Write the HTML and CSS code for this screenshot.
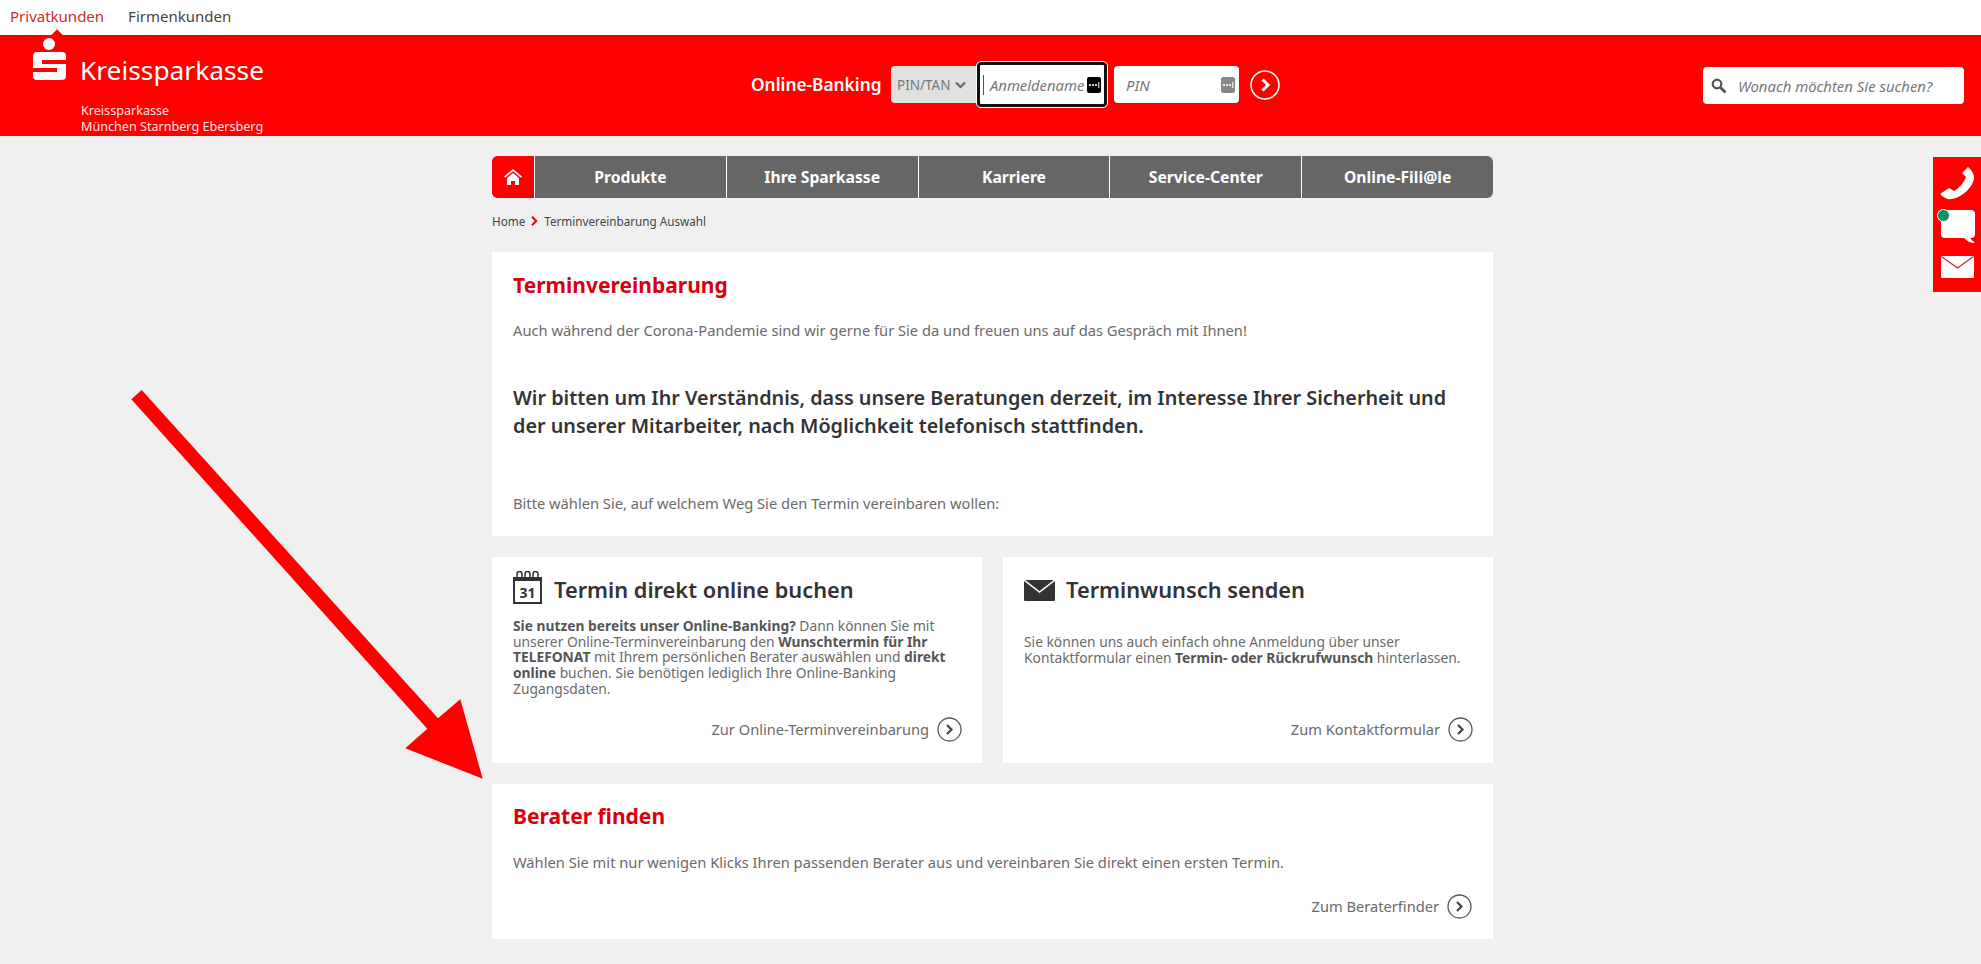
FILE: index.html
```html
<!DOCTYPE html>
<html lang="de">
<head>
<meta charset="utf-8">
<title>Terminvereinbarung</title>
<link rel="stylesheet" href="styles.css">
</head>
<body>
<div class="topbar">
  <a class="tab tab-active">Privatkunden</a>
  <a class="tab">Firmenkunden</a>
</div>
<header class="header">
  <span class="pointer"></span>
  <div class="brand">
    <div class="brand-main">
      <svg class="s-logo" viewBox="0 0 33 42" width="33" height="42"><circle cx="16" cy="6" r="6" fill="#fff"/><rect x="0" y="14" width="33" height="28" rx="4" fill="#fff"/><rect x="9" y="22" width="24" height="4" fill="#f00"/><rect x="0" y="30" width="24" height="4" fill="#f00"/></svg>
      <span class="brand-name">Kreissparkasse</span>
    </div>
    <div class="brand-sub">Kreissparkasse<br>München Starnberg Ebersberg</div>
  </div>
  <div class="login">
    <span class="login-label">Online-Banking</span>
    <div class="select">PIN/TAN <svg width="11" height="8" viewBox="0 0 11 8"><path d="M1 1.5l4.5 4.5L10 1.5" fill="none" stroke="#666" stroke-width="2.2"/></svg></div>
    <div class="field field-focus"><span class="caret"></span><span class="ph">Anmeldename</span>
      <svg class="key" width="14" height="16" viewBox="0 0 14 16"><rect width="14" height="16" rx="2" fill="#000"/><circle cx="3" cy="8" r="1.1" fill="#fff"/><circle cx="6" cy="8" r="1.1" fill="#fff"/><circle cx="9" cy="8" r="1.1" fill="#fff"/><rect x="11.3" y="5" width="1" height="6" fill="#fff"/></svg>
    </div>
    <div class="field field-pin"><span class="ph">PIN</span>
      <svg class="key" width="14" height="16" viewBox="0 0 14 16"><rect width="14" height="16" rx="2" fill="#888"/><circle cx="3" cy="8" r="1.1" fill="#fff"/><circle cx="6" cy="8" r="1.1" fill="#fff"/><circle cx="9" cy="8" r="1.1" fill="#fff"/><rect x="11.3" y="5" width="1" height="6" fill="#fff"/></svg>
    </div>
    <svg class="go" width="30" height="30" viewBox="0 0 30 30"><circle cx="15" cy="15" r="14" fill="none" stroke="#fff" stroke-width="1.5"/><path d="M12.5 9.5l5.5 5.5-5.5 5.5" fill="none" stroke="#fff" stroke-width="3"/></svg>
  </div>
  <div class="search">
    <svg width="16" height="16" viewBox="0 0 16 16"><circle cx="6" cy="6" r="4.3" fill="none" stroke="#555" stroke-width="2.2"/><path d="M9.5 9.5l5 5" stroke="#555" stroke-width="2.8"/></svg>
    <span class="search-ph">Wonach möchten Sie suchen?</span>
  </div>
</header>

<aside class="side">
  <svg width="34" height="33" viewBox="0 0 34 33"><path d="M28 0C32 3 34 7 34 11C33 20 22 31 11 32C8 33 4 31 0 27L9 21L14 24C19 21 24 16 26 10L22 6Z" fill="#fff"/></svg>
  <span class="chat">
    <svg width="36" height="34" viewBox="0 0 36 34"><path d="M5 0h26a4 4 0 0 1 4 4v20a4 4 0 0 1-4 4h-1l5 5c-5 0-8-2-11-5H5a4 4 0 0 1-4-4V4a4 4 0 0 1 4-4z" fill="#fff"/></svg>
    <span class="chat-dot"></span>
  </span>
  <svg width="33" height="22" viewBox="0 0 33 22"><rect width="33" height="22" rx="1" fill="#fff"/><path d="M0.500 0.500L16.500 12 32.500 0.500" fill="none" stroke="#d02030" stroke-width="1.200"/></svg>
</aside>

<svg class="arrow" width="360" height="400" viewBox="130 388 360 400"><polygon points="141.700,390 131.300,399.300 427.300,728.700 405.300,748.300 482.700,778.700 460.300,699.300 438,718.300" fill="#f00"/></svg>

<main class="content">
  <nav class="nav">
    <a class="nav-home"><svg width="18" height="16" viewBox="0 0 18 16"><path d="M9 0L0 7.500l1 1.300L9 2.200l8 6.600 1-1.300z" fill="#fff"/><path d="M3 9l6-5 6 5v7h-4v-4H7v4H3z" fill="#fff"/></svg></a>
    <a class="nav-item">Produkte</a>
    <a class="nav-item">Ihre Sparkasse</a>
    <a class="nav-item">Karriere</a>
    <a class="nav-item">Service-Center</a>
    <a class="nav-item">Online-Fili@le</a>
  </nav>
  <div class="crumbs">
    <span>Home</span>
    <svg width="7" height="10" viewBox="0 0 7 10"><path d="M1 .8L5.200 5 1 9.200" fill="none" stroke="#e2000f" stroke-width="2"/></svg>
    <span>Terminvereinbarung Auswahl</span>
  </div>

  <section class="card card-intro">
    <h1 class="title">Terminvereinbarung</h1>
    <p class="text text-first">Auch während der Corona-Pandemie sind wir gerne für Sie da und freuen uns auf das Gespräch mit Ihnen!</p>
    <p class="lead">Wir bitten um Ihr Verständnis, dass unsere Beratungen derzeit, im Interesse Ihrer Sicherheit und der unserer Mitarbeiter, nach Möglichkeit telefonisch stattfinden.</p>
    <p class="text text-last">Bitte wählen Sie, auf welchem Weg Sie den Termin vereinbaren wollen:</p>
  </section>

  <div class="row">
    <section class="card card-half">
      <div class="head">
        <svg class="cal" width="29" height="33" viewBox="0 0 29 33"><path d="M1 7h27v25H1z" fill="none" stroke="#333" stroke-width="2"/><path d="M1 7h27v3H1z" fill="#333"/><path d="M4 7V3a2.500 2.500 0 0 1 5 0v4M12 7V3a2.500 2.500 0 0 1 5 0v4M20 7V3a2.500 2.500 0 0 1 5 0v4" fill="none" stroke="#333" stroke-width="1.500"/><text x="14.500" y="27" class="cal-num">31</text></svg>
        <h2 class="subtitle">Termin direkt online buchen</h2>
      </div>
      <p class="small"><b>Sie nutzen bereits unser Online-Banking?</b> Dann können Sie mit unserer Online-Terminvereinbarung den <b>Wunschtermin für Ihr TELEFONAT</b> mit Ihrem persönlichen Berater auswählen und <b>direkt online</b> buchen. Sie benötigen lediglich Ihre Online-Banking Zugangsdaten.</p>
      <a class="more">Zur Online-Terminvereinbarung<svg width="25" height="25" viewBox="0 0 25 25"><circle cx="12.500" cy="12.500" r="11.500" fill="none" stroke="#555" stroke-width="1.300"/><path d="M10 8l4.500 4.500L10 17" fill="none" stroke="#444" stroke-width="2.200"/></svg></a>
    </section>
    <section class="card card-half">
      <div class="head head-mail">
        <svg class="mail" width="31" height="21" viewBox="0 0 31 21"><rect width="31" height="21" rx="1" fill="#333"/><path d="M0 0l15.500 12L31 0" fill="none" stroke="#fff" stroke-width="1.500"/></svg>
        <h2 class="subtitle">Terminwunsch senden</h2>
      </div>
      <p class="small small-low">Sie können uns auch einfach ohne Anmeldung über unser Kontaktformular einen <b>Termin- oder Rückrufwunsch</b> hinterlassen.</p>
      <a class="more">Zum Kontaktformular<svg width="25" height="25" viewBox="0 0 25 25"><circle cx="12.500" cy="12.500" r="11.500" fill="none" stroke="#555" stroke-width="1.300"/><path d="M10 8l4.500 4.500L10 17" fill="none" stroke="#444" stroke-width="2.200"/></svg></a>
    </section>
  </div>

  <section class="card card-finder">
    <h1 class="title">Berater finden</h1>
    <p class="text text-finder">Wählen Sie mit nur wenigen Klicks Ihren passenden Berater aus und vereinbaren Sie direkt einen ersten Termin.</p>
    <a class="more more-finder">Zum Beraterfinder<svg width="25" height="25" viewBox="0 0 25 25"><circle cx="12.500" cy="12.500" r="11.500" fill="none" stroke="#555" stroke-width="1.300"/><path d="M10 8l4.500 4.500L10 17" fill="none" stroke="#444" stroke-width="2.200"/></svg></a>
  </section>
</main>
</body>
</html>
```

FILE: styles.css
```css
* { box-sizing: border-box; }
html, body { margin: 0; padding: 0; }
body {
  background: #f0f0f0;
  font-family: "Noto Sans", "Open Sans", sans-serif;
  color: #6a6a6a;
  position: relative;
  min-height: 964px;
  overflow: hidden;
}
p, h1, h2 { margin: 0; }

.topbar {
  height: 35px;
  background: #fff;
  display: flex;
  align-items: center;
  gap: 24px;
  padding: 0 0 3px 10px;
  font-size: 15px;
}
.tab { color: #444; }
.tab-active { color: #c5302c; }

.header {
  position: relative;
  height: 101px;
  background: #f00;
  display: flex;
  align-items: flex-start;
  padding: 0 17px 0 33px;
  color: #fff;
}
.pointer {
  position: absolute;
  left: 53px;
  top: -4px;
  width: 8px;
  height: 8px;
  background: #f00;
  transform: rotate(45deg);
}
.brand { width: 718px; padding-top: 3px; }
.brand-main { display: flex; align-items: flex-end; gap: 14px; }
.brand-name { font-size: 26.300px; line-height: 30px; margin-bottom: -5px; }
.brand-sub { font-size: 12.600px; line-height: 16px; margin: 23px 0 0 48px; opacity: .9; white-space: nowrap; }

.login { display: flex; align-items: center; padding-top: 27px; }
.login-label { font-size: 17.300px; font-weight: 600; width: 140px; white-space: nowrap; }
.select {
  width: 86px;
  height: 37px;
  background: #e1e1e1;
  border-radius: 4px 0 0 4px;
  color: #777;
  font-size: 13.500px;
  display: flex;
  align-items: center;
  gap: 5px;
  padding-left: 6px;
}
.field {
  position: relative;
  background: #fff;
  height: 37px;
  border-radius: 4px;
  display: flex;
  align-items: center;
  font-style: italic;
  font-size: 14.800px;
  color: #777;
}
.field-focus {
  width: 130px;
  height: 45px;
  border: 3px solid #111;
  outline: 1px solid #fff;
  padding-left: 3px;
  gap: 6px;
  white-space: nowrap;
}
.caret { width: 1px; height: 20px; background: #555; }
.field-pin { width: 125px; margin-left: 7px; padding-left: 12px; }
.key { position: absolute; right: 3px; top: 50%; margin-top: -8px; }
.field-pin .key { right: 4px; }
.go { margin-left: 11px; }

.search {
  margin: 32px 0 0 auto;
  width: 261px;
  height: 37px;
  background: #fff;
  border-radius: 4px;
  display: flex;
  align-items: center;
  gap: 11px;
  padding-left: 8px;
}
.search-ph { font-style: italic; font-size: 14.900px; color: #777; white-space: nowrap; }

.side {
  position: absolute;
  right: 0;
  top: 157px;
  width: 48px;
  height: 135px;
  background: #f00;
  display: flex;
  flex-direction: column;
  align-items: center;
  padding-top: 10px;
}
.side > svg:last-child { margin-top: 12px; }
.chat { position: relative; display: block; height: 34px; margin-top: 10px; margin-left: 2px; }
.chat-dot {
  position: absolute;
  left: -3px;
  top: -1px;
  width: 13px;
  height: 13px;
  border-radius: 50%;
  background: #0b8f68;
  border: 1.5px solid #fff;
}

.arrow { position: absolute; left: 130px; top: 388px; }

.content { width: 1001px; margin: 20px 0 0 492px; }

.nav {
  height: 42px;
  display: grid;
  grid-template-columns: 42px repeat(5, 1fr);
  border-radius: 6px;
  overflow: hidden;
  background: #666;
}
.nav-home { background: #f00; display: flex; align-items: center; justify-content: center; }
.nav-item {
  border-left: 1px solid #fff;
  color: #fff;
  font-weight: 700;
  font-size: 15.700px;
  display: flex;
  align-items: center;
  justify-content: center;
}

.crumbs {
  height: 54px;
  padding-bottom: 8px;
  display: flex;
  align-items: center;
  gap: 6px;
  font-size: 11.700px;
  color: #444;
}

.card { background: #fff; padding: 0 21px; }
.card-intro { height: 284px; padding-top: 21px; }
.title { font-size: 21px; line-height: 24px; font-weight: 700; color: #d9000d; }
.text { font-size: 14.700px; line-height: 20px; }
.text-first { margin-top: 23px; }
.lead { margin-top: 44px; font-size: 19.800px; line-height: 27.500px; font-weight: 600; color: #333; }
.text-last { margin-top: 54px; }

.row { display: grid; grid-template-columns: 1fr 1fr; gap: 21px; margin: 21px 0; }
.card-half { height: 206px; padding: 13px 20px 21px 21px; display: flex; flex-direction: column; }
.head { display: flex; align-items: center; gap: 12px; height: 34px; margin-top: 3px; margin-bottom: 11px; }
.head-mail { gap: 11px; }
.cal { margin-top: -6px; }
.cal-num { font-size: 14px; font-weight: 700; fill: #333; text-anchor: middle; }
.subtitle { font-size: 21.800px; line-height: 34px; font-weight: 600; color: #333; white-space: nowrap; }
.small { font-size: 13.800px; line-height: 15.700px; }
.small b { color: #555; }
.small-low { margin-top: 16px; }
.more {
  margin-top: auto;
  align-self: flex-end;
  display: flex;
  align-items: center;
  gap: 8px;
  font-size: 14.650px;
  line-height: 25px;
}

.card-finder { height: 155px; padding-top: 20px; display: flex; flex-direction: column; }
.text-finder { margin-top: 24px; }
.more-finder { margin: 22px 0 0 auto; }
```
